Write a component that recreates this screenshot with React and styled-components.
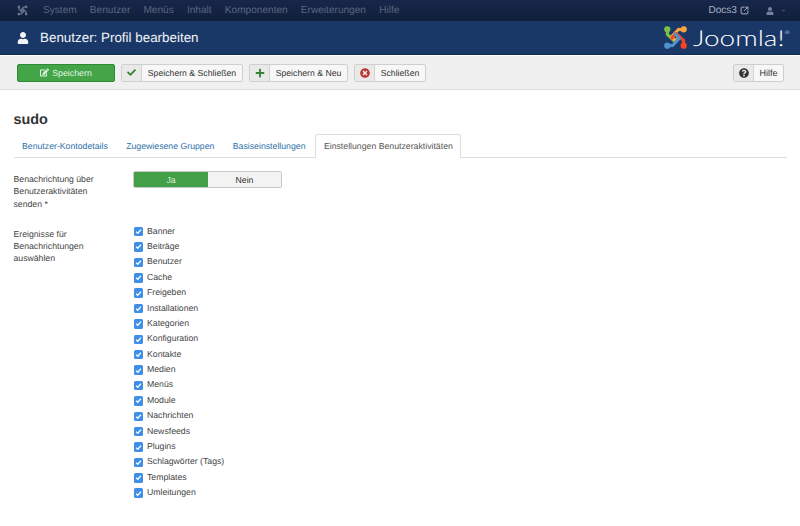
import React from "react";
import styled, { createGlobalStyle } from "styled-components";
import { FaUser, FaCheck, FaPlus, FaTimesCircle, FaQuestionCircle, FaEdit, FaCaretDown } from "react-icons/fa";
import { SquareArrowOutUpRight } from "lucide-react";

const GlobalStyle = createGlobalStyle`
  html, body { margin: 0; padding: 0; background: #fff; }
  body {
    font-family: "Liberation Sans", Arial, sans-serif;
    font-size: 8.7px;
    color: #333;
    width: 800px;
    height: 526px;
    overflow: hidden;
    text-rendering: geometricPrecision;
  }
  * { box-sizing: border-box; }
`;

const TopBar = styled.div`
  height: 21px;
  background: linear-gradient(#17274a, #111f3c);
  display: flex;
  align-items: center;
  padding: 0 13px 0 17px;
`;

const TopMenu = styled.nav`
  display: flex;
  gap: 13.2px;
  margin-left: 15px;
  flex: 1;
`;

const TopLink = styled.span`
  color: #59667f;
  font-size: 10.1px;
`;

const TopRight = styled.div`
  display: flex;
  align-items: center;
  color: #a9b1c0;
  font-size: 10.1px;
  gap: 3px;
`;

const UserMenu = styled.span`
  display: flex;
  align-items: center;
  gap: 6px;
  margin-left: 14px;
  color: #76809a;
`;

const Header = styled.header`
  height: 34px;
  background: #1a3867;
  border-bottom: 1px solid #112a52;
  display: flex;
  align-items: center;
  justify-content: space-between;
  padding: 0 16px 0 17px;
  color: #fff;
`;

const Title = styled.h1`
  margin: 0;
  display: flex;
  align-items: center;
  gap: 11px;
  font-size: 13.4px;
  font-weight: 400;
  color: #f1f4f8;
`;

const Logo = styled.div`
  display: flex;
  align-items: center;
  gap: 5px;
`;

const LogoText = styled.span`
  display: inline-block;
  width: 91px;
  font-family: Lato, sans-serif;
  font-weight: 300;
  font-size: 22px;
  color: #fff;
  line-height: 1;
  white-space: nowrap;
  transform: scaleX(1.27);
  transform-origin: left center;
`;

const LogoReg = styled.sup`
  font-size: 5px;
  vertical-align: 12px;
  line-height: 0;
`;

const Toolbar = styled.div`
  height: 34px;
  margin-top: 1px;
  background: #f0f0f0;
  border-bottom: 1px solid #dcdcdc;
  display: flex;
  align-items: center;
  padding: 0 16px 0 17px;
  gap: 6px;
`;

const SaveButton = styled.button`
  width: 98px;
  height: 18px;
  border: 1px solid #2f8a36;
  border-radius: 2px;
  background: #43a548;
  color: #e4f3e4;
  font: 8.8px "Liberation Sans", Arial, sans-serif;
  text-rendering: geometricPrecision;
  display: flex;
  align-items: center;
  justify-content: center;
  gap: 3px;
  padding: 0;
`;

const ToolButton = styled.button`
  height: 18px;
  width: ${(p) => p.$width}px;
  border: 1px solid #cfcfcf;
  border-radius: 2px;
  background: #f7f7f7;
  color: #333;
  font: 8.7px "Liberation Sans", Arial, sans-serif;
  text-rendering: geometricPrecision;
  display: flex;
  align-items: stretch;
  padding: 0;
  margin-left: ${(p) => (p.$right ? "auto" : "0")};
`;

const ToolIcon = styled.span`
  flex: 0 0 20px;
  background: #e9e9e9;
  border-right: 1px solid #d4d4d4;
  display: flex;
  align-items: center;
  justify-content: center;
  color: ${(p) => p.$color};
  font-size: ${(p) => p.$size || 9}px;
`;

const ToolLabel = styled.span`
  flex: 1;
  display: flex;
  align-items: center;
  justify-content: center;
  color: #333;
  font-size: ${(p) => p.$size || 8.7}px;
`;

const Content = styled.main`
  padding: 0 13.5px;
`;

const UserName = styled.h2`
  margin: 22px 0 0;
  height: 17px;
  font-size: 14.4px;
  line-height: 17px;
  font-weight: 700;
  color: #333;
`;

const Tabs = styled.div`
  display: flex;
  margin-top: 5px;
  height: 24px;
  border-bottom: 1px solid #ddd;
`;

const Tab = styled.div`
  height: ${(p) => (p.$active ? "24px" : "23px")};
  padding: 0 7.5px;
  margin-right: 1.4px;
  font-size: 8.72px;
  display: flex;
  align-items: center;
  color: ${(p) => (p.$active ? "#555" : "#3071a9")};
  background: #fff;
  border: 1px solid ${(p) => (p.$active ? "#ddd" : "transparent")};
  border-bottom-color: ${(p) => (p.$active ? "#fff" : "transparent")};
  border-radius: 3px 3px 0 0;
`;

const FormRow = styled.div`
  display: flex;
  margin-top: 13px;
`;

const Label = styled.label`
  width: 119.5px;
  line-height: 12.3px;
  color: #444;
  padding-right: 18px;
  padding-top: ${(p) => p.$pad}px;
`;

const Toggle = styled.div`
  display: flex;
  width: 149px;
  height: 17px;
  border: 1px solid #c8c8c8;
  border-radius: 2px;
  overflow: hidden;
`;

const ToggleOption = styled.div`
  flex: ${(p) => (p.$on ? "0 0 74px" : "1")};
  display: flex;
  align-items: center;
  justify-content: center;
  background: ${(p) => (p.$on ? "#43a047" : "#f3f3f3")};
  color: ${(p) => (p.$on ? "#dff0df" : "#333")};
`;

const CheckList = styled.div`
  display: flex;
  flex-direction: column;
  padding-left: 0.5px;
`;

const CheckRow = styled.div`
  height: 15.4px;
  display: flex;
  align-items: center;
  gap: 4px;
  color: #444;
`;

const Box = styled.span`
  width: 9.5px;
  height: 9.5px;
  border-radius: 1.5px;
  background: #3f8ee8;
  display: flex;
  align-items: center;
  justify-content: center;
  position: relative;
  top: 1px;
`;

const groups = [
  "Banner", "Beiträge", "Benutzer", "Cache", "Freigeben", "Installationen",
  "Kategorien", "Konfiguration", "Kontakte", "Medien", "Menüs", "Module",
  "Nachrichten", "Newsfeeds", "Plugins", "Schlagwörter (Tags)", "Templates", "Umleitungen",
];

const JoomlaMark = ({ size, colors }) => (
  <svg width={size} height={size} viewBox="0 0 32 32" fill="none" strokeWidth="4" strokeLinecap="round" strokeLinejoin="round">
    {colors.map((c, i) => (
      <g key={c + i} transform={`rotate(${i * 90} 16 16)`}>
        <path d="M6 8 L5.5 12 L15 21 L20.5 15.5" stroke={c} />
        <circle cx="5.5" cy="5.5" r="4" fill={c} />
      </g>
    ))}
  </svg>
);

const App = () => (
  <>
    <GlobalStyle />
    <TopBar>
      <JoomlaMark size={11} colors={["#66728a", "#66728a", "#66728a", "#66728a"]} />
      <TopMenu>
        {["System", "Benutzer", "Menüs", "Inhalt", "Komponenten", "Erweiterungen", "Hilfe"].map((m) => (
          <TopLink key={m}>{m}</TopLink>
        ))}
      </TopMenu>
      <TopRight>
        Docs3 <SquareArrowOutUpRight size={9} strokeWidth={2.6} />
        <UserMenu>
          <FaUser size={8} />
          <FaCaretDown size={7} color="#3c4963" />
        </UserMenu>
      </TopRight>
    </TopBar>
    <Header>
      <Title>
        <FaUser size={12} />
        Benutzer: Profil bearbeiten
      </Title>
      <Logo>
        <JoomlaMark size={25} colors={["#7ac143", "#f9a541", "#f44321", "#5091cd"]} />
        <LogoText>Joomla!<LogoReg>®</LogoReg></LogoText>
      </Logo>
    </Header>
    <Toolbar>
      <SaveButton><FaEdit size={9} /> Speichern</SaveButton>
      <ToolButton $width={122}>
        <ToolIcon $color="#378137"><FaCheck /></ToolIcon>
        <ToolLabel>Speichern &amp; Schließen</ToolLabel>
      </ToolButton>
      <ToolButton $width={99}>
        <ToolIcon $color="#378137" $size={10}><FaPlus /></ToolIcon>
        <ToolLabel>Speichern &amp; Neu</ToolLabel>
      </ToolButton>
      <ToolButton $width={72}>
        <ToolIcon $color="#bd362f" $size={10}><FaTimesCircle /></ToolIcon>
        <ToolLabel>Schließen</ToolLabel>
      </ToolButton>
      <ToolButton $right $width={51}>
        <ToolIcon $color="#333" $size={10}><FaQuestionCircle /></ToolIcon>
        <ToolLabel $size={9}>Hilfe</ToolLabel>
      </ToolButton>
    </Toolbar>
    <Content>
      <UserName>sudo</UserName>
      <Tabs>
        <Tab>Benutzer-Kontodetails</Tab>
        <Tab>Zugewiesene Gruppen</Tab>
        <Tab>Basiseinstellungen</Tab>
        <Tab $active>Einstellungen Benutzeraktivitäten</Tab>
      </Tabs>
      <FormRow>
        <Label $pad={2}>Benachrichtung über Benutzeraktivitäten senden *</Label>
        <Toggle>
          <ToggleOption $on>Ja</ToggleOption>
          <ToggleOption>Nein</ToggleOption>
        </Toggle>
      </FormRow>
      <FormRow>
        <Label $pad={5}>Ereignisse für Benachrichtungen auswählen</Label>
        <CheckList>
          {groups.map((g) => (
            <CheckRow key={g}>
              <Box>
                <svg width="7" height="7" viewBox="0 0 8 8" fill="none" stroke="#fff" strokeWidth="1.5">
                  <path d="M1.3 4.2 L3.2 6 L6.8 1.8" />
                </svg>
              </Box>
              {g}
            </CheckRow>
          ))}
        </CheckList>
      </FormRow>
    </Content>
  </>
);

export default App;
